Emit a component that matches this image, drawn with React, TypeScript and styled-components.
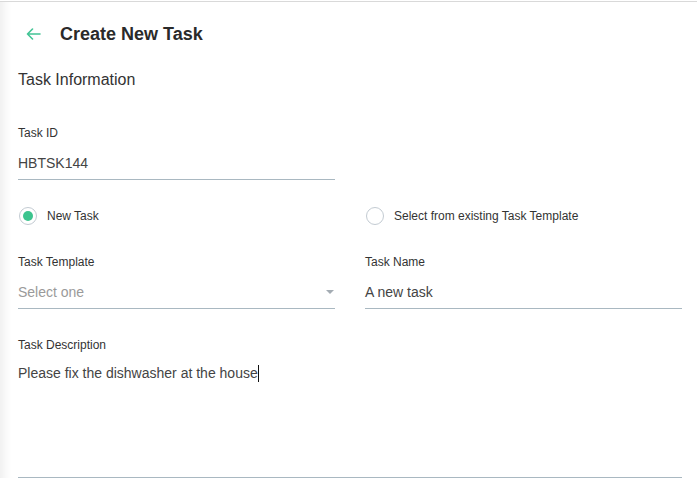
import React from "react";
import styled, { createGlobalStyle } from "styled-components";

const Global = createGlobalStyle`
  html, body { margin: 0; padding: 0; background: #fff; }
  body { font-family: "Liberation Sans", Arial, Helvetica, sans-serif; }
`;

const Page = styled.div`
  width: 697px;
  height: 478px;
  box-sizing: border-box;
  overflow: hidden;
  background: #fff;
  border-top: 1px solid #fff;
  box-shadow: inset 12px 0 10px -8px rgba(0, 0, 0, 0.07);
`;

const TopRule = styled.div`
  height: 1px;
  background: #d9d9d9;
`;

const Header = styled.header`
  height: 64px;
  display: flex;
  align-items: center;
  padding-left: 26px;
  gap: 19px;
`;

const Title = styled.h1`
  margin: 0;
  font-size: 18px;
  font-weight: 700;
  color: #2a2a2a;
  line-height: 20px;
`;

const Content = styled.div`
  padding: 0 15px 0 18px;
`;

const SectionTitle = styled.h2`
  margin: 4px 0 0;
  font-size: 16px;
  font-weight: 400;
  color: #333;
  line-height: 20px;
`;

const Row = styled.div<{ $mt: number }>`
  display: grid;
  grid-template-columns: 1fr 1fr;
  column-gap: 30px;
  margin-top: ${(p) => p.$mt}px;
`;

const Field = styled.div<{ $mt?: number }>`
  display: flex;
  flex-direction: column;
  margin-top: ${(p) => p.$mt ?? 0}px;
`;

const Label = styled.label`
  font-size: 12px;
  line-height: 14px;
  color: #333;
  margin-bottom: 6px;
`;

const InputBox = styled.div<{ $muted?: boolean }>`
  height: 33px;
  display: flex;
  align-items: center;
  justify-content: space-between;
  border-bottom: 1px solid #a9b8c1;
  font-size: 14px;
  color: ${(p) => (p.$muted ? "#9a9a9a" : "#444")};
`;

const TextArea = styled.div`
  height: 114px;
  padding-top: 5px;
  border-bottom: 1px solid #a9b8c1;
  font-size: 14px;
  line-height: 20px;
  color: #444;
`;

const Caret = styled.span`
  display: inline-block;
  width: 1px;
  height: 17px;
  background: #111;
  vertical-align: -4px;
`;

const RadioOption = styled.div`
  display: flex;
  align-items: center;
  gap: 10px;
  height: 18px;
  font-size: 12px;
  color: #333;
`;

const RadioCircle = styled.span<{ $checked?: boolean }>`
  width: 18px;
  height: 18px;
  box-sizing: border-box;
  border-radius: 50%;
  border: 1px solid #c3cbd2;
  display: flex;
  align-items: center;
  justify-content: center;
  margin-left: 1px;
  &::after {
    content: "";
    width: 10px;
    height: 10px;
    border-radius: 50%;
    background: ${(p) => (p.$checked ? "#3cc48e" : "transparent")};
  }
`;

const Triangle = styled.span`
  width: 0;
  height: 0;
  border-left: 4px solid transparent;
  border-right: 4px solid transparent;
  border-top: 4px solid #a4acb3;
  margin-right: 1px;
`;

const BackArrow = () => (
  <svg width="15" height="12" viewBox="0 0 15 12" fill="none">
    <path
      d="M14 6H1.5M6.5 1L1.5 6l5 5"
      stroke="#43c495"
      strokeWidth="1.6"
      strokeLinecap="round"
      strokeLinejoin="round"
    />
  </svg>
);

export default function App() {
  return (
    <>
      <Global />
      <Page>
        <TopRule />
        <Header>
          <BackArrow />
          <Title>Create New Task</Title>
        </Header>
        <Content>
          <SectionTitle>Task Information</SectionTitle>
          <Row $mt={36}>
            <Field>
              <Label>Task ID</Label>
              <InputBox>HBTSK144</InputBox>
            </Field>
          </Row>
          <Row $mt={27}>
            <RadioOption>
              <RadioCircle $checked />
              New Task
            </RadioOption>
            <RadioOption>
              <RadioCircle />
              Select from existing Task Template
            </RadioOption>
          </Row>
          <Row $mt={30}>
            <Field>
              <Label>Task Template</Label>
              <InputBox $muted>
                Select one
                <Triangle />
              </InputBox>
            </Field>
            <Field>
              <Label>Task Name</Label>
              <InputBox>A new task</InputBox>
            </Field>
          </Row>
          <Field $mt={29}>
            <Label>Task Description</Label>
            <TextArea>
              Please fix the dishwasher at the house
              <Caret />
            </TextArea>
          </Field>
        </Content>
      </Page>
    </>
  );
}
